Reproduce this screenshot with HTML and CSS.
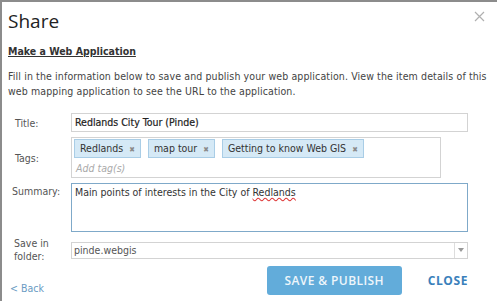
FILE: index.html
```html
<!DOCTYPE html>
<html>
<head>
  <title>Share</title>
  <link rel="stylesheet" href="styles.css">
</head>
<body>
  <div class="dialog">
    <div class="header">
      <h1>Share</h1>
      <svg class="close" width="11" height="11" viewBox="0 0 11 11">
        <path d="M1 1 L10 10 M10 1 L1 10" stroke="#b0b0b0" stroke-width="1.2" fill="none"/>
      </svg>
    </div>
    <h2>Make a Web Application</h2>
    <p class="intro">Fill in the information below to save and publish your web application. View the item details of this web mapping application to see the URL to the application.</p>

    <div class="form">
      <div class="row row-title">
        <label>Title:</label>
        <div class="field title-field">Redlands City Tour (Pinde)</div>
      </div>
      <div class="row row-tags">
        <label>Tags:</label>
        <div class="field tags-field">
          <div class="tags">
            <span class="tag">Redlands <b>&#x2716;</b></span>
            <span class="tag">map tour <b>&#x2716;</b></span>
            <span class="tag">Getting to know Web GIS <b>&#x2716;</b></span>
          </div>
          <span class="add-tag">Add tag(s)</span>
        </div>
      </div>
      <div class="row row-summary">
        <label>Summary:</label>
        <div class="field summary-field">Main points of interests in the City of <span class="misspelt">Redlands</span></div>
      </div>
      <div class="row row-folder">
        <label>Save in<br>folder:</label>
        <div class="field folder-field">
          <span class="folder-name">pinde.webgis</span>
          <span class="arrow"></span>
        </div>
      </div>
    </div>

    <div class="footer">
      <a class="back">&lt; Back</a>
      <div class="actions">
        <button class="publish">SAVE &amp; PUBLISH</button>
        <a class="close-link">CLOSE</a>
      </div>
    </div>
  </div>
</body>
</html>
```

FILE: styles.css
```css
body {
  margin: 0;
  background: #fff;
  font-family: "DejaVu Sans Condensed", "DejaVu Sans", sans-serif;
  color: #444;
}

.dialog {
  height: 299px;
  border-top: 2px solid #8c8c8c;
  border-left: 2px solid #8c8c8c;
  padding: 0 9px 0 6px;
}

.header {
  display: flex;
  justify-content: space-between;
  align-items: center;
  height: 38px;
}

h1 {
  margin: 0;
  font-family: "Open Sans", sans-serif;
  font-weight: normal;
  font-size: 19px;
  color: #222;
}

.close {
  margin: 0 3px 10px 0;
}

h2 {
  margin: 5px 0 0;
  font-size: 10.5px;
  font-weight: bold;
  color: #333;
  text-decoration: underline;
}

.intro {
  margin: 12px 0 0;
  font-size: 10.5px;
  line-height: 15px;
  letter-spacing: 0.12px;
}

.form {
  margin-top: 14px;
}

.row {
  display: flex;
  align-items: center;
  margin-bottom: 5px;
}

.row label {
  width: 56px;
  padding-left: 7px;
  font-size: 10.5px;
  color: #555;
}

.field {
  border: 1px solid #d3d3d3;
  font-size: 10.5px;
  box-sizing: border-box;
}

.title-field {
  width: 397px;
  height: 19px;
  padding: 2px 3px;
  color: #222;
  -webkit-text-stroke: 0.2px #222;
}

.tags-field {
  width: 370px;
  height: 41px;
  padding: 1px 2px;
}

.tags {
  display: flex;
  gap: 7px;
}

.tag {
  background: #d5e9f6;
  border: 1px solid #a9cde6;
  padding: 2px 5px 3px;
  color: #333;
  font-size: 10.5px;
}

.tag b {
  color: #8a8a8a;
  font-size: 7.5px;
  margin-left: 3px;
}

.add-tag {
  display: block;
  margin: 4px 0 0 2px;
  font-style: italic;
  color: #aaa;
}

.row-summary {
  align-items: flex-start;
}

.row-summary label {
  padding-left: 4px;
  width: 59px;
  margin-top: 2px;
}

.summary-field {
  width: 397px;
  height: 49px;
  padding: 2px 3px;
  border-color: #7fa9c9;
  color: #333;
}

.misspelt {
  text-decoration: underline wavy #d33;
}

.row-folder label {
  padding-left: 6px;
  width: 57px;
  line-height: 13px;
}

.folder-field {
  width: 397px;
  height: 17px;
  display: flex;
  justify-content: space-between;
  align-items: center;
  color: #555;
}

.folder-name {
  padding-left: 2px;
}

.arrow {
  width: 12px;
  height: 100%;
  border-left: 1px solid #ddd;
  display: flex;
  align-items: center;
  justify-content: center;
}

.arrow::after {
  content: "";
  border-left: 3px solid transparent;
  border-right: 3px solid transparent;
  border-top: 4px solid #999;
}

.footer {
  display: flex;
  justify-content: space-between;
  align-items: flex-end;
  margin-top: -2px;
}

.back {
  color: #6a9bc3;
  font-size: 10.5px;
  margin: 0 0 1px 2px;
}

.actions {
  display: flex;
  align-items: center;
  gap: 26px;
}

.publish {
  width: 135px;
  height: 29px;
  background: #62acda;
  border: none;
  border-radius: 3px;
  color: #eef6fb;
  font-family: "Open Sans", sans-serif;
  font-weight: 600;
  font-size: 12px;
  letter-spacing: 0.4px;
}

.close-link {
  color: #3a80bb;
  font-family: "Open Sans", sans-serif;
  font-size: 12px;
  font-weight: bold;
  letter-spacing: 0.6px;
  margin-right: 20px;
}
```
